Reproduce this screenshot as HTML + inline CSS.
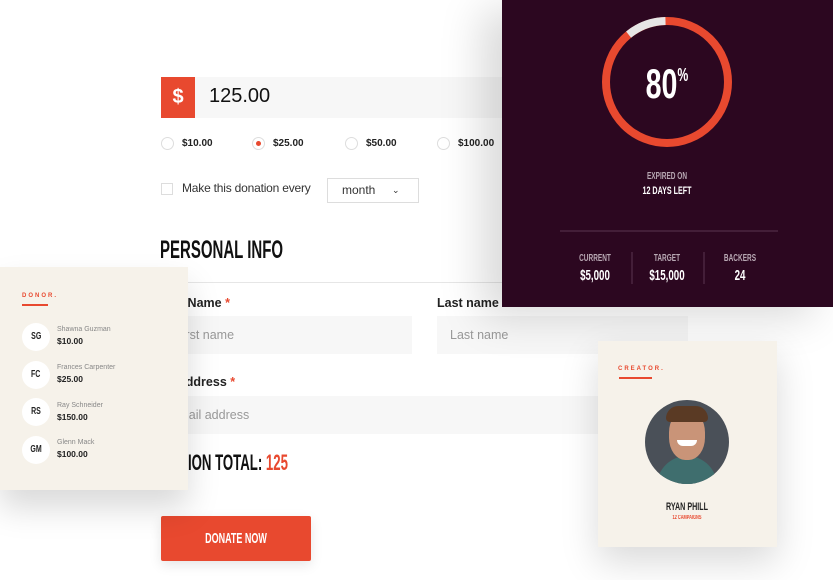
<!DOCTYPE html>
<html><head><meta charset="utf-8"><style>
*{margin:0;padding:0;box-sizing:border-box}
body{width:833px;height:580px;overflow:hidden;background:#fff;position:relative;font-family:"Liberation Sans",sans-serif;color:#222}
.a{position:absolute}
.cond{font-family:"Liberation Sans Narrow","Liberation Sans",sans-serif;font-weight:bold;transform-origin:left top;transform:scaleX(.6);white-space:nowrap}
.cc{position:absolute;font-family:"Liberation Sans Narrow","Liberation Sans",sans-serif;font-weight:bold;text-align:center;transform-origin:center top;transform:scaleX(.65);white-space:nowrap;width:120px}
.inp{background:#f7f7f7;position:absolute;height:38px;color:#999;font-size:12.5px;line-height:38px}
.lbl{position:absolute;font-size:12.5px;font-weight:bold;color:#222}
.radio{position:absolute;width:13px;height:13px;border:1px solid #ddd;border-radius:50%}
.rt{position:absolute;font-size:10px;font-weight:bold;color:#222}
.don{position:absolute;left:22px;width:28px;height:28px;border-radius:50%;background:#fff;text-align:center;line-height:28px;font-size:10px;font-family:"Liberation Sans Narrow","Liberation Sans",sans-serif;font-weight:bold}
.dn{position:absolute;left:57px;font-size:7px;color:#888}
.da{position:absolute;left:57px;font-size:8.5px;font-weight:bold;color:#222}
</style></head><body>

<div class="a" style="left:161px;top:77px;width:34px;height:41px;background:#e8492f;color:#fff;font-size:20px;font-weight:bold;text-align:center;line-height:41px">$</div>
<div class="a" style="left:195px;top:77px;width:310px;height:41px;background:#f7f7f7"></div>
<div class="a" style="left:209px;top:85px;font-size:20px;color:#111">125.00</div>

<div class="radio" style="left:161px;top:137px"></div><div class="rt" style="left:182px;top:138px">$10.00</div>
<div class="radio" style="left:252px;top:137px"></div><div class="a" style="left:256px;top:141px;width:5px;height:5px;border-radius:50%;background:#e8492f"></div><div class="rt" style="left:273px;top:138px">$25.00</div>
<div class="radio" style="left:345px;top:137px"></div><div class="rt" style="left:366px;top:138px">$50.00</div>
<div class="radio" style="left:437px;top:137px"></div><div class="rt" style="left:458px;top:138px">$100.00</div>

<div class="a" style="left:161px;top:183px;width:12px;height:12px;border:1px solid #ddd"></div>
<div class="a" style="left:182px;top:181px;font-size:12px;color:#333;letter-spacing:-.2px">Make this donation every</div>
<div class="a" style="left:327px;top:178px;width:92px;height:25px;border:1px solid #ddd;font-size:12px;line-height:23px;padding-left:14px;color:#333">month <span style="position:absolute;left:64px;font-size:9px">&#8964;</span></div>

<div class="a cond" style="left:160px;top:236px;font-size:25px;color:#111">PERSONAL INFO</div>
<div class="a" style="left:160px;top:282px;width:400px;height:1px;background:#e6e6e6"></div>

<div class="lbl" style="left:157px;top:296px">First Name <span style="color:#e8492f">*</span></div>
<div class="inp" style="left:160px;top:316px;width:252px;padding-left:15px">First name</div>
<div class="lbl" style="left:437px;top:296px">Last name</div>
<div class="inp" style="left:437px;top:316px;width:251px;padding-left:13px">Last name</div>
<div class="lbl" style="left:142px;top:375px">Email address <span style="color:#e8492f">*</span></div>
<div class="inp" style="left:160px;top:396px;width:450px;padding-left:10px">Email address</div>
<div class="a cond" style="left:142px;top:450px;font-size:22px;color:#111">DONATION TOTAL: <span style="color:#e8492f">125</span></div>

<div class="a" style="left:161px;top:516px;width:150px;height:45px;background:#e8492f;border-radius:2px;box-shadow:0 4px 12px rgba(0,0,0,.1)"></div>
<div class="cc" style="left:176px;top:530px;font-size:15px;color:#fff;transform:scaleX(.6)">DONATE NOW</div>

<!-- donor card -->
<div class="a" style="left:0;top:267px;width:188px;height:223px;background:#f6f2ea;box-shadow:0 18px 30px rgba(0,0,0,.15)">
<div class="a" style="left:22px;top:26px;font-size:6px;letter-spacing:2px;color:#e8492f;font-weight:bold">DONOR.</div>
<div class="a" style="left:22px;top:37px;width:26px;height:1.5px;background:#e8492f"></div>
<div class="don" style="top:56px"><span style="display:inline-block;transform:scaleX(.7)">SG</span></div><div class="dn" style="top:59px">Shawna Guzman</div><div class="da" style="top:69px">$10.00</div>
<div class="don" style="top:94px"><span style="display:inline-block;transform:scaleX(.7)">FC</span></div><div class="dn" style="top:97px">Frances Carpenter</div><div class="da" style="top:107px">$25.00</div>
<div class="don" style="top:131px"><span style="display:inline-block;transform:scaleX(.7)">RS</span></div><div class="dn" style="top:135px">Ray Schneider</div><div class="da" style="top:145px">$150.00</div>
<div class="don" style="top:169px"><span style="display:inline-block;transform:scaleX(.7)">GM</span></div><div class="dn" style="top:172px">Glenn Mack</div><div class="da" style="top:182px">$100.00</div>
</div>

<!-- dark panel -->
<div class="a" style="left:502px;top:0;width:331px;height:307px;background:#2c0720;box-shadow:-20px 10px 40px rgba(0,0,0,.15)">
<svg class="a" style="left:0;top:0" width="331" height="307">
<circle cx="165" cy="82" r="61" fill="none" stroke="#e8492f" stroke-width="8"/>
<circle cx="165" cy="82" r="61" fill="none" stroke="#e6e6e6" stroke-width="8" stroke-dasharray="40 400" transform="rotate(-129 165 82)"/>
<line x1="58" y1="231" x2="276" y2="231" stroke="#5a3550" stroke-width="1"/>
<line x1="130" y1="252" x2="130" y2="284" stroke="#5a3550"/>
<line x1="202" y1="252" x2="202" y2="284" stroke="#5a3550"/>
</svg>
<div class="cc" style="left:105px;top:60px;font-size:42px;color:#fff;transform:scaleX(.68)">80<sup style="font-size:18px;vertical-align:17px">%</sup></div>
<div class="cc" style="left:105px;top:171px;font-size:10px;color:#b8a8b3">EXPIRED ON</div>
<div class="cc" style="left:105px;top:185px;font-size:11px;color:#fff">12 DAYS LEFT</div>
<div class="cc" style="left:33px;top:253px;font-size:10px;color:#b8a8b3">CURRENT</div>
<div class="cc" style="left:33px;top:267px;font-size:15px;color:#fff">$5,000</div>
<div class="cc" style="left:105px;top:253px;font-size:10px;color:#b8a8b3">TARGET</div>
<div class="cc" style="left:105px;top:267px;font-size:15px;color:#fff">$15,000</div>
<div class="cc" style="left:178px;top:253px;font-size:10px;color:#b8a8b3">BACKERS</div>
<div class="cc" style="left:178px;top:267px;font-size:15px;color:#fff">24</div>
</div>

<!-- creator card -->
<div class="a" style="left:598px;top:341px;width:179px;height:206px;background:#f6f2ea;box-shadow:0 15px 35px rgba(0,0,0,.15)">
<div class="a" style="left:20px;top:25px;font-size:6px;letter-spacing:2px;color:#e8492f;font-weight:bold">CREATOR.</div>
<div class="a" style="left:21px;top:36px;width:33px;height:1.5px;background:#e8492f"></div>
<div class="a" style="left:47px;top:59px;width:84px;height:84px;border-radius:50%;background:#4a5058;overflow:hidden">
<div class="a" style="left:12px;top:56px;width:60px;height:40px;border-radius:30px 30px 0 0;background:#3f6e6e"></div>
<div class="a" style="left:24px;top:10px;width:36px;height:50px;border-radius:45%;background:#c99478"></div>
<div class="a" style="left:21px;top:6px;width:42px;height:16px;border-radius:20px 20px 6px 6px;background:#5a3a24"></div>
<div class="a" style="left:32px;top:40px;width:20px;height:6px;border-radius:0 0 10px 10px;background:#fff"></div>
</div>
<div class="cc" style="left:29px;top:160px;font-size:11px;color:#222">RYAN PHILL</div>
<div class="cc" style="left:29px;top:174px;font-size:6px;color:#e8492f">12 CAMPAIGNS</div>
</div>

</body></html>
